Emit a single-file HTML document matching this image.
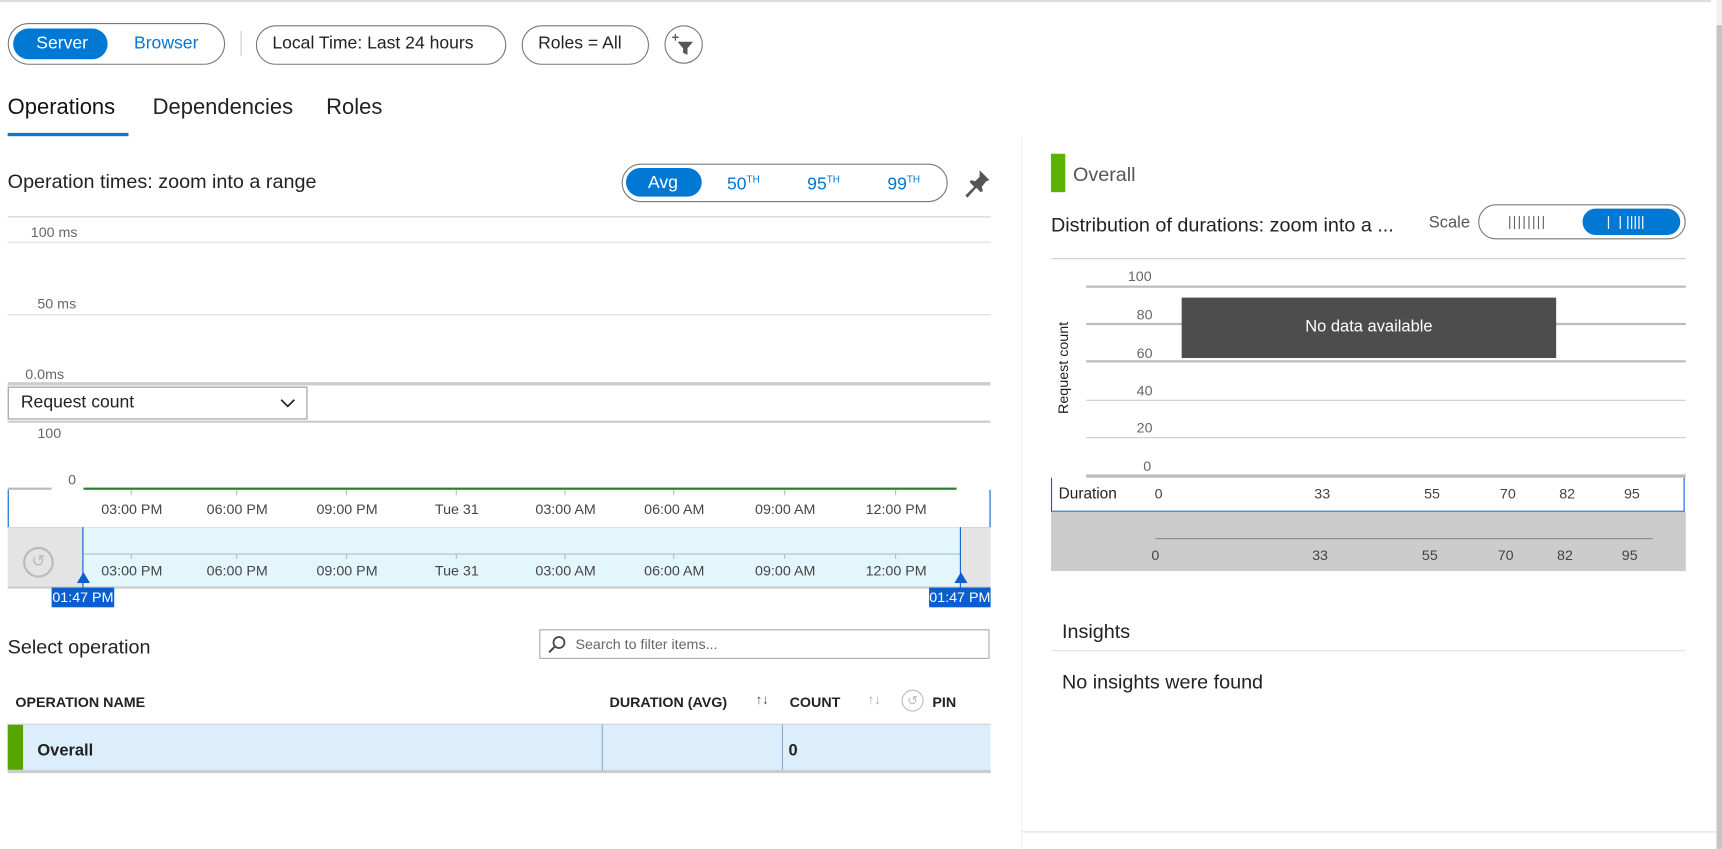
<!DOCTYPE html>
<html><head><meta charset="utf-8"><style>
*{margin:0;padding:0;box-sizing:border-box}
body{width:1722px;height:849px;overflow:hidden;background:#fff;font-family:"Liberation Sans",sans-serif;color:#222;position:relative}
#w{position:absolute;left:0;top:0;width:1568px;height:773px;transform:scale(1.09821);transform-origin:0 0}
.a{position:absolute;white-space:nowrap}
.pill{position:absolute;border:1px solid #777;border-radius:20px}
.hl{position:absolute;height:1px;background:#ccc}
.t{font-size:13px;color:#444;transform:translateX(-50%)}
.g{color:#666;font-size:13px}
</style></head><body><div id="w">
<div class="a" style="left:0;top:0;width:1558px;height:2px;background:#ddd"></div>
<div class="a" style="left:1563px;top:0;width:5px;height:773px;background:#f0f0f0"></div>
<div class="a" style="left:1563px;top:23px;width:5px;height:750px;background:#c4c4c4"></div>

<div class="pill" style="left:7px;top:21px;width:198px;height:38px"></div>
<div class="a" style="left:12px;top:26px;width:86px;height:28px;background:#0078d4;border-radius:14px"></div>
<div class="a" style="left:33px;top:31px;font-size:16px;color:#fff">Server</div>
<div class="a" style="left:122px;top:31px;font-size:16px;color:#0078d4">Browser</div>
<div class="a" style="left:219px;top:28px;width:1px;height:23px;background:#ccc"></div>
<div class="pill" style="left:233px;top:23px;width:228px;height:36px"></div>
<div class="a" style="left:248px;top:31px;font-size:16px">Local Time: Last 24 hours</div>
<div class="pill" style="left:475px;top:23px;width:116px;height:36px"></div>
<div class="a" style="left:490px;top:31px;font-size:16px">Roles = All</div>
<div class="a" style="left:605px;top:23px;width:35px;height:35px;border:1px solid #777;border-radius:50%"></div>
<svg class="a" style="left:605px;top:23px" width="35" height="35"><path d="M12 15h14l-5 6v6l-4 -2v-4z" fill="#555"/><path d="M10 8v6M7 11h6" stroke="#555" stroke-width="1.2"/></svg>

<div class="a" style="left:7px;top:87px;font-size:20px;color:#111">Operations</div>
<div class="a" style="left:7px;top:121px;width:110px;height:3px;background:#0078d4"></div>
<div class="a" style="left:139px;top:87px;font-size:20px;color:#222">Dependencies</div>
<div class="a" style="left:297px;top:87px;font-size:20px;color:#222">Roles</div>

<div class="a" style="left:7px;top:155px;font-size:18px">Operation times: zoom into a range</div>
<div class="pill" style="left:566px;top:149px;width:297px;height:35px"></div>
<div class="a" style="left:570px;top:153px;width:69px;height:26px;background:#0078d4;border-radius:13px"></div>
<div class="a" style="left:590px;top:158px;font-size:16px;color:#fff">Avg</div>
<div class="a" style="left:662px;top:158px;font-size:16px;color:#0078d4">50<sup style="font-size:9px">TH</sup></div>
<div class="a" style="left:735px;top:158px;font-size:16px;color:#0078d4">95<sup style="font-size:9px">TH</sup></div>
<div class="a" style="left:808px;top:158px;font-size:16px;color:#0078d4">99<sup style="font-size:9px">TH</sup></div>
<svg class="a" style="left:874px;top:152px" width="30" height="30"><path d="M18 3l9 9-3 1-4 5 1 4-2 1-4-4-8 9-2-2 8-8-4-4 1-2 4 1 4-4z" fill="#555"/></svg>

<div class="hl" style="left:7px;top:197px;width:895px"></div>
<div class="hl" style="left:7px;top:220px;width:895px;background:#ddd"></div>
<div class="hl" style="left:7px;top:286px;width:895px;background:#ddd"></div>
<div class="a g" style="left:28px;top:204px">100 ms</div>
<div class="a g" style="left:34px;top:269px">50 ms</div>
<div class="a g" style="left:23px;top:333px">0.0ms</div>
<div class="a" style="left:7px;top:348px;width:895px;height:3px;background:#ccc"></div>
<div class="a" style="left:7px;top:352px;width:273px;height:30px;border:1px solid #999"></div>
<div class="a" style="left:19px;top:358px;font-size:16px">Request count</div>
<svg class="a" style="left:254px;top:362px" width="16" height="10"><path d="M2 2l6 6 6-6" stroke="#222" stroke-width="1.5" fill="none"/></svg>
<div class="a" style="left:7px;top:383px;width:895px;height:2px;background:#ccc"></div>
<div class="a g" style="left:34px;top:387px">100</div>
<div class="a g" style="left:62px;top:429px">0</div>
<div class="a" style="left:7px;top:444px;width:40px;height:2px;background:#bbb"></div>
<div class="a" style="left:76px;top:444px;width:795px;height:2px;background:#2e7d32"></div>
<div class="a" style="left:7px;top:446px;width:895px;height:35px;border-left:1px solid #0a5fd0;border-right:1px solid #0a5fd0;border-bottom:1px solid #0a5fd0"></div>
<div class="a" style="left:7px;top:480px;width:69px;height:55px;background:#e4e4e4"></div>
<div class="a" style="left:76px;top:480px;width:798px;height:55px;background:#e3f6fc"></div>
<div class="a" style="left:874px;top:480px;width:28px;height:55px;background:#e4e4e4"></div>
<div class="a" style="left:76px;top:504px;width:798px;height:1px;background:#a7c0cc"></div>
<div class="a" style="left:7px;top:534px;width:895px;height:2px;background:#ccc"></div>
<div class="a" style="left:75px;top:480px;width:1px;height:55px;background:#0a5fd0"></div>
<div class="a" style="left:874px;top:480px;width:1px;height:55px;background:#0a5fd0"></div>
<div class="a" style="left:21px;top:498px;width:28px;height:28px;border:2px solid #bbb;border-radius:50%;color:#bbb;font-size:15px;text-align:center;line-height:24px">↺</div>
<div id="ticks"></div>
<svg class="a" style="left:70px;top:521px" width="12" height="10"><path d="M6 0l6 10H0z" fill="#0a5fd0"/></svg>
<svg class="a" style="left:869px;top:521px" width="12" height="10"><path d="M6 0l6 10H0z" fill="#0a5fd0"/></svg>
<div class="a" style="left:47px;top:535px;width:57px;height:18px;background:#0a5fd0;color:#fff;font-size:13px;line-height:18px;text-align:center">01:47 PM</div>
<div class="a" style="left:846px;top:535px;width:56px;height:18px;background:#0a5fd0;color:#fff;font-size:13px;line-height:18px;text-align:center">01:47 PM</div>

<div class="a" style="left:7px;top:579px;font-size:18px">Select operation</div>
<div class="a" style="left:491px;top:573px;width:410px;height:27px;border:1px solid #aaa"></div>
<svg class="a" style="left:498px;top:577px" width="20" height="20"><circle cx="11" cy="8" r="5" stroke="#444" stroke-width="1.6" fill="none"/><path d="M7 12l-5 5" stroke="#444" stroke-width="1.8"/></svg>
<div class="a" style="left:524px;top:579px;font-size:13px;color:#666">Search to filter items...</div>

<div class="a" style="left:14px;top:632px;font-size:13px;font-weight:bold">OPERATION NAME</div>
<div class="a" style="left:555px;top:632px;font-size:13px;font-weight:bold">DURATION (AVG)</div>
<div class="a" style="left:688px;top:630px;font-size:12px;color:#555">↑↓</div>
<div class="a" style="left:719px;top:632px;font-size:13px;font-weight:bold">COUNT</div>
<div class="a" style="left:790px;top:630px;font-size:12px;color:#aaa">↑↓</div>
<div class="a" style="left:821px;top:628px;width:20px;height:20px;border:1px solid #bbb;border-radius:50%;color:#bbb;font-size:12px;text-align:center;line-height:18px">↺</div>
<div class="a" style="left:849px;top:632px;font-size:13px;font-weight:bold">PIN</div>
<div class="a" style="left:7px;top:659px;width:895px;height:1px;background:#ccc"></div>
<div class="a" style="left:7px;top:660px;width:895px;height:41px;background:#dcedfb"></div>
<div class="a" style="left:7px;top:660px;width:14px;height:41px;background:#57a300"></div>
<div class="a" style="left:548px;top:660px;width:1px;height:41px;background:#8eaad0"></div>
<div class="a" style="left:712px;top:660px;width:1px;height:41px;background:#8eaad0"></div>
<div class="a" style="left:34px;top:675px;font-size:15px;font-weight:bold">Overall</div>
<div class="a" style="left:718px;top:675px;font-size:15px;font-weight:bold">0</div>
<div class="a" style="left:7px;top:701px;width:895px;height:3px;background:#ccc"></div>

<div class="a" style="left:930px;top:125px;width:1px;height:648px;background:#eee"></div>
<div class="a" style="left:957px;top:140px;width:13px;height:35px;background:#5cb200"></div>
<div class="a" style="left:977px;top:149px;font-size:18px;color:#555">Overall</div>
<div class="a" style="left:957px;top:195px;font-size:18px">Distribution of durations: zoom into a ...</div>
<div class="a" style="left:1301px;top:194px;font-size:15px;color:#555">Scale</div>
<div class="pill" style="left:1346px;top:186px;width:189px;height:32px"></div>
<div class="a" style="left:1373px;top:194px;font-size:13px;color:#666;letter-spacing:1px">||||||||</div>
<div class="a" style="left:1441px;top:190px;width:89px;height:24px;background:#0078d4;border-radius:12px"></div>
<div class="a" style="left:1463px;top:194px;font-size:13px;color:#fff">| &nbsp;|&nbsp;|||||</div>
<div class="hl" style="left:957px;top:235px;width:578px"></div>
<div class="hl" style="left:989px;top:260px;width:546px;height:2px;background:#bbb"></div>
<div class="hl" style="left:989px;top:294px;width:546px;height:2px;background:#bbb"></div>
<div class="hl" style="left:989px;top:328px;width:546px;height:2px;background:#bbb"></div>
<div class="hl" style="left:989px;top:364px;width:546px"></div>
<div class="hl" style="left:989px;top:398px;width:546px"></div>
<div class="a" style="left:989px;top:432px;width:546px;height:3px;background:#bbb"></div>
<div class="a g" style="left:1027px;top:244px">100</div>
<div class="a g" style="left:1035px;top:279px">80</div>
<div class="a g" style="left:1035px;top:314px">60</div>
<div class="a g" style="left:1035px;top:348px">40</div>
<div class="a g" style="left:1035px;top:382px">20</div>
<div class="a g" style="left:1041px;top:417px">0</div>
<div class="a" style="left:968px;top:335px;font-size:13px;color:#222;transform:translate(-50%,-50%) rotate(-90deg)">Request count</div>
<div class="a" style="left:1076px;top:271px;width:341px;height:55px;background:#4d4d4d"></div>
<div class="a" style="left:1076px;top:289px;width:341px;text-align:center;color:#fff;font-size:15px">No data available</div>
<div class="a" style="left:957px;top:435px;width:577px;height:31px;border-left:1px solid #0a5fd0;border-right:1px solid #0a5fd0;border-bottom:1px solid #0a5fd0"></div>
<div class="a" style="left:964px;top:441px;font-size:14px">Duration</div>
<div class="a t" style="left:1055px;top:442px">0</div>
<div class="a t" style="left:1204px;top:442px">33</div>
<div class="a t" style="left:1304px;top:442px">55</div>
<div class="a t" style="left:1373px;top:442px">70</div>
<div class="a t" style="left:1427px;top:442px">82</div>
<div class="a t" style="left:1486px;top:442px">95</div>
<div class="a" style="left:957px;top:466px;width:578px;height:54px;background:#cccccc"></div>
<div class="a" style="left:1052px;top:490px;width:453px;height:1px;background:#888"></div>
<div class="a t" style="left:1052px;top:498px">0</div>
<div class="a t" style="left:1202px;top:498px">33</div>
<div class="a t" style="left:1302px;top:498px">55</div>
<div class="a t" style="left:1371px;top:498px">70</div>
<div class="a t" style="left:1425px;top:498px">82</div>
<div class="a t" style="left:1484px;top:498px">95</div>
<div class="a" style="left:967px;top:565px;font-size:18px">Insights</div>
<div class="a" style="left:957px;top:592px;width:578px;height:1px;background:#e0e0e0"></div>
<div class="a" style="left:967px;top:611px;font-size:18px">No insights were found</div>
<div class="a" style="left:930px;top:757px;width:633px;height:1px;background:#ddd"></div>

<script>
var xs=[120,216,316,416,515,614,715,816],l=["03:00 PM","06:00 PM","09:00 PM","Tue 31","03:00 AM","06:00 AM","09:00 AM","12:00 PM"],h="";
for(var i=0;i<8;i++){
h+='<div class="a t" style="left:'+xs[i]+'px;top:456px">'+l[i]+'</div><div class="a t" style="left:'+xs[i]+'px;top:512px">'+l[i]+'</div>';
h+='<div class="a" style="left:'+(xs[i]-1)+'px;top:446px;width:1px;height:5px;background:#bbb"></div><div class="a" style="left:'+(xs[i]-1)+'px;top:504px;width:1px;height:5px;background:#a7c0cc"></div>';}
document.getElementById("ticks").innerHTML=h;
</script>
</div></body></html>
